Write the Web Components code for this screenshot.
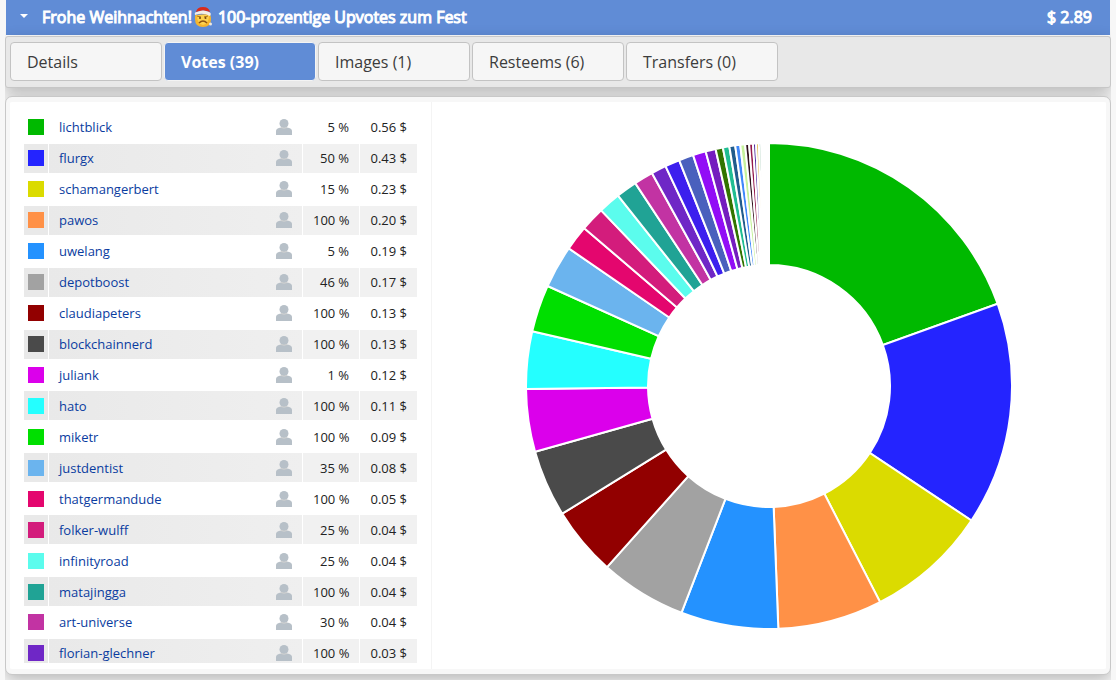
<!DOCTYPE html>
<html lang="de">
<head>
<meta charset="utf-8">
<title>Votes</title>
<style>
html { background: #f7f7f7; }
body { margin: 0; font-family: "Open Sans", "Noto Sans", sans-serif; font-size: 16px; color: #3c3c3c; }
</style>
</head>
<body>
<post-card>
  <post-header slot="header" amount="$ 2.89">
    <span>Frohe Weihnachten!</span><santa-face></santa-face><span>100-prozentige Upvotes zum Fest</span>
  </post-header>
  <tab-bar slot="tabs">
    <tab-item>Details</tab-item>
    <tab-item active>Votes (39)</tab-item>
    <tab-item>Images (1)</tab-item>
    <tab-item>Resteems (6)</tab-item>
    <tab-item>Transfers (0)</tab-item>
  </tab-bar>
  <vote-list></vote-list>
  <vote-chart></vote-chart>
</post-card>

<script>
const define = (name, html, setup) => {
  const template = document.createElement('template');
  template.innerHTML = html;
  customElements.define(name, class extends HTMLElement {
    connectedCallback() {
      if (this.shadowRoot) return;
      const root = this.attachShadow({ mode: 'open' });
      root.append(template.content.cloneNode(true));
      if (setup) setup(this, root);
    }
  });
};

define('post-card', `
<style>
  :host { display: block; margin: 0 5px; padding-bottom: 5px; overflow: hidden; }
  .head { margin: 0 1px; border-bottom: 1px solid #fff; }
  .panel { display: flex; margin-top: 8px; padding: 5px 4px; border: 1px solid #c8c8c8; border-radius: 7px;
    background: linear-gradient(#fff, #fff) content-box, #f7f7f7; box-shadow: 0 5px 15px rgba(0,0,0,.25); position: relative; }
</style>
<div class="head"><slot name="header"></slot></div>
<slot name="tabs"></slot>
<section class="panel"><slot></slot></section>`);

define('post-header', `
<style>
  :host { display: block; }
  button { display: flex; align-items: center; width: 100%; height: 35px; padding: 0 18px 2px 14px; border: 0; border-radius: 0;
    background: #608cd6; color: #fff; font: inherit; text-align: left; white-space: nowrap; -webkit-text-stroke: 1px #fff; paint-order: stroke; }
  .arrow { width: 9px; height: 5px; margin-right: 13px; }
  .title { display: flex; align-items: center; flex: 1; }
</style>
<button type="button" aria-expanded="true">
  <svg class="arrow" viewBox="0 0 9 5" aria-hidden="true"><path d="M0 0H8L4 4Z" fill="#fff"/></svg>
  <span class="title"><slot></slot></span>
  <span class="amount"></span>
</button>`, (host, root) => { root.querySelector('.amount').textContent = host.getAttribute('amount'); });

define('santa-face', `
<style>
  :host { display: block; width: 19px; height: 22px; margin: 0 5px 0 2px; }
  svg { display: block; }
</style>
<svg width="19" height="22" viewBox="0 0 19 22" role="img" aria-label="Santa">
  <path d="M2 9Q1 8 1 13Q1 21 9 21Q17 21 17 13Q17 9 15 8Z" fill="#f7b52c"/>
  <path d="M3 9Q3 18 9 19Q15 18 15 9Z" fill="#fdd14f"/>
  <path d="M2 6Q3 1 9 1Q15 1 16 6Q9 3 2 6Z" fill="#d92b1c"/>
  <path d="M1 9Q0 6 3 6Q9 3 15 6Q18 7 16 10Q9 6 1 9Z" fill="#f3eee7"/>
  <path d="M3 10L7 11M14 10L10 11" stroke="#a96d16"/>
  <circle cx="6" cy="12" r="1" fill="#704514"/><circle cx="11.500" cy="12" r="1" fill="#704514"/>
  <path d="M5 17Q9 13 13 17" fill="none" stroke="#8c5213" stroke-width="1.500"/>
  <circle cx="16.500" cy="18" r="1.500" fill="#eee9df"/>
</svg>`);

define('tab-bar', `
<style>
  :host { display: block; }
  nav { display: flex; gap: 2px; padding: 5px 4px 6px; border: 1px solid #c8c8c8; border-radius: 3px; background: #e8e8e8;
    box-shadow: 0 5px 15px rgba(0,0,0,.25); }
</style>
<nav role="tablist"><slot></slot></nav>`);

define('tab-item', `
<style>
  :host { display: block; width: 152px; }
  button { display: block; box-sizing: border-box; width: 100%; height: 39px; padding: 0 16px; border: 1px solid #c3c3c3; border-radius: 4px;
    background: #f6f6f6; color: #3c3c3c; font: inherit; line-height: 36px; text-align: left; white-space: nowrap; }
  :host([active]) button { border-color: #f4f4f4; background: #608cd6; color: #fff; font-weight: 700; }
</style>
<button type="button" role="tab"><slot></slot></button>`, (host, root) => {
  root.querySelector('button').setAttribute('aria-selected', host.hasAttribute('active'));
});

const votes = [
  ['lichtblick', 5, '0.56', '#00b900'], ['flurgx', 50, '0.43', '#2424ff'], ['schamangerbert', 15, '0.23', '#dbdb00'],
  ['pawos', 100, '0.20', '#ff9147'], ['uwelang', 5, '0.19', '#2492ff'], ['depotboost', 46, '0.17', '#a2a2a2'],
  ['claudiapeters', 100, '0.13', '#920000'], ['blockchainnerd', 100, '0.13', '#4a4a4a'], ['juliank', 1, '0.12', '#db00eb'],
  ['hato', 100, '0.11', '#24ffff'], ['miketr', 100, '0.09', '#00df00'], ['justdentist', 35, '0.08', '#6bb4ee'],
  ['thatgermandude', 100, '0.05', '#e4066e'], ['folker-wulff', 25, '0.04', '#d31c7c'], ['infinityroad', 25, '0.04', '#5bfced'],
  ['matajingga', 100, '0.04', '#20a395'], ['art-universe', 30, '0.04', '#c233a3'], ['florian-glechner', 100, '0.03', '#6f27c6']
];

define('vote-list', `
<style>
  :host { display: block; box-sizing: border-box; width: 422px; flex: none; padding: 9px 13px 6px 13px; border-right: 1px solid #f4f4f4; }
  .scroll { max-height: 552px; overflow-y: auto; scrollbar-width: none; }
  table { width: 100%; height: 559px; table-layout: fixed; border-spacing: 1px 2px; font-size: 13px; line-height: 18px; color: #222; }
  col.key { width: 24px; } col.num { width: 56px; } col.sum { width: 57px; }
  td { padding: 0 10px; text-align: right; white-space: nowrap; }
  td.key { padding: 0 4px; }
  td.key i { display: block; width: 16px; height: 16px; }
  .who { display: flex; align-items: center; justify-content: space-between; }
  a { color: #0a3ca0; text-decoration: none; }
  svg { display: block; width: 16px; height: 16px; }
  tr:nth-child(even) td { background: #f1f1f1; }
  tr:nth-child(even) td.key { background: #e9e9e9; }
  tr:nth-child(even) td.name { background: linear-gradient(90deg, #e9e9e9, #efefef); }
</style>
<div class="scroll"><table aria-label="Votes">
  <colgroup><col class="key"><col><col class="num"><col class="sum"></colgroup>
  <tbody></tbody>
</table></div>`, (host, root) => {
  root.querySelector('tbody').innerHTML = votes.map(([name, pct, sum, color]) => `<tr>
    <td class="key"><i style="background:${color}"></i></td>
    <td class="name"><div class="who"><a href="#${name}">${name}</a>
      <svg viewBox="0 0 16 16" aria-hidden="true"><path d="M0 16V12Q0 9 5 8.500H11Q16 9 16 12V16Z" fill="#b7c0c8"/><circle cx="8" cy="4.500" r="4.500" fill="#b7c0c8"/><path d="M5 8.500Q8 10 11 8.500" fill="none" stroke="#d0d0d0"/></svg></div></td>
    <td>${pct} %</td><td>${sum} $</td></tr>`).join('');
});

// End angle of every slice, in degrees clockwise from the top.
const ends = [70.2, 123.6, 152.8, 177.8, 201.1, 221.8, 238.3, 254.3, 269.3, 283, 294.3, 304.5, 310.5, 316.3, 321.6, 326.6,
  331.2, 334.8, 338.3, 341.8, 344.9, 347.3, 349.05, 350.6, 352, 353.2, 354.35, 355.3, 356.2, 356.95, 357.6, 358.15,
  358.6, 358.9, 359.2, 359.4, 359.6, 359.8, 360];
const colors = votes.map(v => v[3]).concat(['#3c1fee', '#4a60bd', '#920df6', '#741dbe', '#327400', '#20bd92', '#205c8c', '#3f88fb',
  '#c6f29d', '#30101c', '#94194c', '#5029a0', '#dcae30', '#288052', '#e8cfa0', '#c6e8d4', '#dfe6f0', '#f2dcdc', '#e5e5e5', '#eeeeee', '#eeeeee']);

define('vote-chart', `
<style>
  :host { display: flex; flex: 1; min-width: 0; align-items: center; justify-content: center; }
  svg { display: block; width: 100%; max-width: 486px; height: auto; }
  path { stroke: #fff; stroke-width: 2; }
</style>
<svg viewBox="-243 -243 486 486" role="img" aria-label="Votes"></svg>`, (host, root) => {
  const R = 243, r = 121;
  const at = (deg, rad) => {
    const a = deg * Math.PI / 180;
    return (Math.sin(a) * rad).toFixed(2) + ' ' + (-Math.cos(a) * rad).toFixed(2);
  };
  root.querySelector('svg').innerHTML = ends.map((end, i) => {
    const start = i ? ends[i - 1] : 0;
    return `<path fill="${colors[i]}" d="M${at(start, R)}A${R} ${R} 0 0 1 ${at(end, R)}L${at(end, r)}A${r} ${r} 0 0 0 ${at(start, r)}Z"/>`;
  }).join('');
});
</script>
</body>
</html>
